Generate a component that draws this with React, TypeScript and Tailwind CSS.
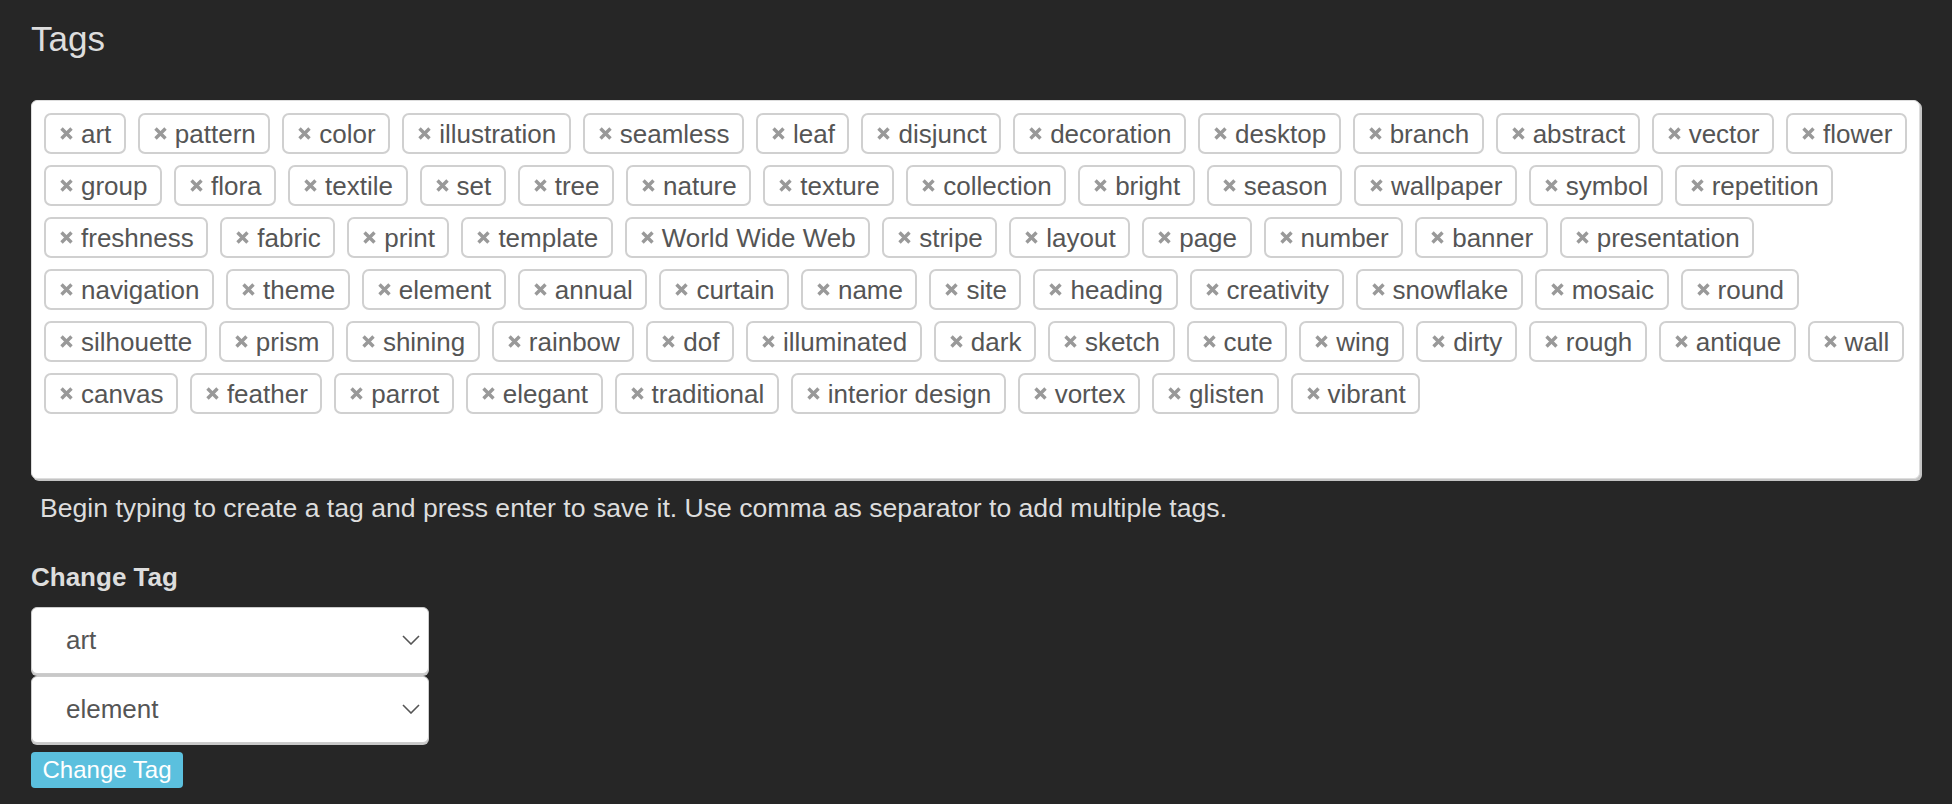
import React from "react";

const rows: string[][] = [
  ["art", "pattern", "color", "illustration", "seamless", "leaf", "disjunct", "decoration", "desktop", "branch", "abstract", "vector", "flower"],
  ["group", "flora", "textile", "set", "tree", "nature", "texture", "collection", "bright", "season", "wallpaper", "symbol", "repetition"],
  ["freshness", "fabric", "print", "template", "World Wide Web", "stripe", "layout", "page", "number", "banner", "presentation"],
  ["navigation", "theme", "element", "annual", "curtain", "name", "site", "heading", "creativity", "snowflake", "mosaic", "round"],
  ["silhouette", "prism", "shining", "rainbow", "dof", "illuminated", "dark", "sketch", "cute", "wing", "dirty", "rough", "antique", "wall"],
  ["canvas", "feather", "parrot", "elegant", "traditional", "interior design", "vortex", "glisten", "vibrant"],
];

const font = { fontFamily: '"Liberation Sans", Arial, Helvetica, sans-serif' };

function XIcon() {
  return (
    <svg width="13" height="13" viewBox="0 0 13 13" className="shrink-0">
      <path d="M1.5 1.5 L11.5 11.5 M11.5 1.5 L1.5 11.5" stroke="#999999" strokeWidth="3.4" strokeLinecap="butt" />
    </svg>
  );
}

function Tag({ label }: { label: string }) {
  return (
    <div className="flex h-[41px] items-center gap-[8px] rounded-[7px] border-2 border-[#d0d0d0] bg-white pl-[14px] pr-[12.5px] text-[26px] leading-none text-[#555555]">
      <XIcon />
      <span className="whitespace-nowrap">{label}</span>
    </div>
  );
}

function Chevron() {
  return (
    <svg width="18" height="10" viewBox="0 0 18 10">
      <path d="M1 1 L9 9 L17 1" fill="none" stroke="#555555" strokeWidth="1.6" />
    </svg>
  );
}

function FakeSelect({ value }: { value: string }) {
  return (
    <div className="flex h-[67px] w-[398px] items-center justify-between rounded-[6px] border border-[#cccccc] bg-white pl-[34px] pr-[8px] text-[26px] text-[#555555] shadow-[0_2px_0_#c8c8c8]">
      <span>{value}</span>
      <Chevron />
    </div>
  );
}

export default function App() {
  return (
    <div className="min-h-[804px] w-full bg-[#262626] px-[31px] pt-[22px]" style={font}>
      <h1 className="text-[35px] leading-[34px] text-[#dddddd]">Tags</h1>
      <div className="mt-[44px] h-[379px] w-[1889px] rounded-[6px] border border-[#dddddd] bg-white px-[12px] pt-[12px] shadow-[2px_2px_0_#c4c4c4]">
        <div className="flex flex-col gap-[11px]">
          {rows.map((row, i) => (
            <div key={i} className="flex gap-[12px]">
              {row.map((t) => (
                <Tag key={t} label={t} />
              ))}
            </div>
          ))}
        </div>
      </div>
      <p className="mt-[16px] pl-[9px] text-[26.6px] leading-[26.5px] text-[#dddddd]">
        Begin typing to create a tag and press enter to save it. Use comma as separator to add multiple tags.
      </p>
      <div className="mt-[42px] text-[26px] font-bold leading-[26px] text-[#dddddd]">Change Tag</div>
      <div className="mt-[17px] flex flex-col gap-[2px]">
        <FakeSelect value="art" />
        <FakeSelect value="element" />
      </div>
      <button className="mt-[9px] flex h-[36px] w-[152px] items-center justify-center rounded-[4px] bg-[#5bc0de] text-[24px] leading-none text-white">
        Change Tag
      </button>
    </div>
  );
}
